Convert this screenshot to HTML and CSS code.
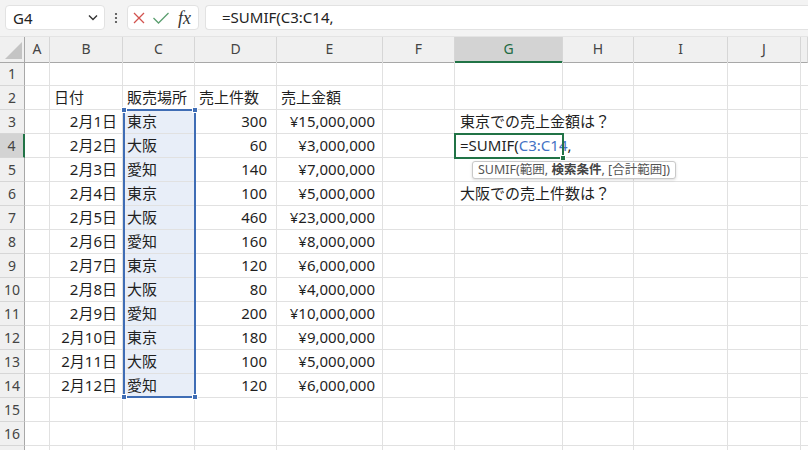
FILE: index.html
```html
<!DOCTYPE html>
<html lang="ja">
<head>
<meta charset="utf-8">
<title>Sheet</title>
<link rel="stylesheet" href="styles.css">
</head>
<body>
<div class="topbar">
  <div class="namebox"><span>G4</span><svg width="10" height="7" viewBox="0 0 10 7"><path d="M1 1.5 L5 5.5 L9 1.5" fill="none" stroke="#333" stroke-width="1.4"/></svg></div>
  <div class="dots"><svg width="4" height="14" viewBox="0 0 4 14"><circle cx="2" cy="3" r="1.1" fill="#444"/><circle cx="2" cy="7" r="1.1" fill="#444"/><circle cx="2" cy="11" r="1.1" fill="#444"/></svg></div>
  <div class="fnbox">
    <svg class="ico" width="14" height="14" viewBox="0 0 14 14"><path d="M2 2 L12 12 M12 2 L2 12" stroke="#d2534f" stroke-width="1.3" fill="none"/></svg>
    <svg class="ico" width="18" height="14" viewBox="0 0 18 14"><path d="M1.5 7 L6.5 12 L16.5 2" stroke="#5c9f70" stroke-width="1.3" fill="none"/></svg>
    <span class="fx">fx</span>
  </div>
  <div class="formula">=SUMIF(C3:C14,</div>
</div>
<div class="sheet">
  <div class="row hdr"><div class="corner"><svg width="25" height="24" viewBox="0 0 25 24"><polygon points="22,5 22,22 5,22" fill="#c4c4c4"/></svg></div><div>A</div><div>B</div><div>C</div><div>D</div><div>E</div><div>F</div><div class="cur">G</div><div>H</div><div>I</div><div>J</div><div></div></div>
  <div class="row"><div class="rh">1</div><div></div><div></div><div></div><div></div><div></div><div></div><div></div><div></div><div></div><div></div><div></div></div>
  <div class="row"><div class="rh">2</div><div></div><div>日付</div><div>販売場所</div><div>売上件数</div><div>売上金額</div><div></div><div></div><div></div><div></div><div></div><div></div></div>
  <div class="row"><div class="rh">3</div><div></div><div class="dt">2月1日</div><div class="s">東京</div><div class="num">300</div><div class="yen">¥15,000,000</div><div></div><div class="ov">東京での売上金額は？</div><div></div><div></div><div></div><div></div></div>
  <div class="row"><div class="rh cur">4</div><div></div><div class="dt">2月2日</div><div class="s">大阪</div><div class="num">60</div><div class="yen">¥3,000,000</div><div></div><div class="ov">=SUMIF(<span class="ref">C3:C14</span>,</div><div></div><div></div><div></div><div></div></div>
  <div class="row"><div class="rh">5</div><div></div><div class="dt">2月3日</div><div class="s">愛知</div><div class="num">140</div><div class="yen">¥7,000,000</div><div></div><div></div><div></div><div></div><div></div><div></div></div>
  <div class="row"><div class="rh">6</div><div></div><div class="dt">2月4日</div><div class="s">東京</div><div class="num">100</div><div class="yen">¥5,000,000</div><div></div><div class="ov">大阪での売上件数は？</div><div></div><div></div><div></div><div></div></div>
  <div class="row"><div class="rh">7</div><div></div><div class="dt">2月5日</div><div class="s">大阪</div><div class="num">460</div><div class="yen">¥23,000,000</div><div></div><div></div><div></div><div></div><div></div><div></div></div>
  <div class="row"><div class="rh">8</div><div></div><div class="dt">2月6日</div><div class="s">愛知</div><div class="num">160</div><div class="yen">¥8,000,000</div><div></div><div></div><div></div><div></div><div></div><div></div></div>
  <div class="row"><div class="rh">9</div><div></div><div class="dt">2月7日</div><div class="s">東京</div><div class="num">120</div><div class="yen">¥6,000,000</div><div></div><div></div><div></div><div></div><div></div><div></div></div>
  <div class="row"><div class="rh">10</div><div></div><div class="dt">2月8日</div><div class="s">大阪</div><div class="num">80</div><div class="yen">¥4,000,000</div><div></div><div></div><div></div><div></div><div></div><div></div></div>
  <div class="row"><div class="rh">11</div><div></div><div class="dt">2月9日</div><div class="s">愛知</div><div class="num">200</div><div class="yen">¥10,000,000</div><div></div><div></div><div></div><div></div><div></div><div></div></div>
  <div class="row"><div class="rh">12</div><div></div><div class="dt">2月10日</div><div class="s">東京</div><div class="num">180</div><div class="yen">¥9,000,000</div><div></div><div></div><div></div><div></div><div></div><div></div></div>
  <div class="row"><div class="rh">13</div><div></div><div class="dt">2月11日</div><div class="s">大阪</div><div class="num">100</div><div class="yen">¥5,000,000</div><div></div><div></div><div></div><div></div><div></div><div></div></div>
  <div class="row"><div class="rh">14</div><div></div><div class="dt">2月12日</div><div class="s">愛知</div><div class="num">120</div><div class="yen">¥6,000,000</div><div></div><div></div><div></div><div></div><div></div><div></div></div>
  <div class="row"><div class="rh">15</div><div></div><div></div><div></div><div></div><div></div><div></div><div></div><div></div><div></div><div></div><div></div></div>
  <div class="row"><div class="rh">16</div><div></div><div></div><div></div><div></div><div></div><div></div><div></div><div></div><div></div><div></div><div></div></div>
  <div class="row"><div class="rh"></div><div></div><div></div><div></div><div></div><div></div><div></div><div></div><div></div><div></div><div></div><div></div></div>

  <div class="selbox"><i class="h tl"></i><i class="h tr"></i><i class="h bl"></i><i class="h br"></i></div>
  <div class="active"><i class="fill"></i></div>
  <div class="tip">SUMIF(範囲, <b>検索条件</b>, [合計範囲])</div>
</div>
</body>
</html>
```
FILE: styles.css
```css
* { box-sizing: border-box; margin: 0; padding: 0; }
body {
  width: 808px;
  height: 450px;
  overflow: hidden;
  background: #fff;
  font-family: "Noto Sans", "Noto Sans CJK JP", sans-serif;
  color: #1f1f1f;
}
.topbar {
  height: 37px;
  background: #f3f3f3;
  display: flex;
  align-items: flex-start;
  padding: 5px 0 0 5px;
  border-bottom: 1px solid #e4e4e4;
}
.namebox {
  width: 100px;
  height: 25px;
  background: #fff;
  border: 1px solid #e2e2e2;
  border-radius: 4px;
  display: flex;
  align-items: center;
  justify-content: space-between;
  padding: 0 6px 0 7px;
  font-size: 15px;
  color: #222;
}
.dots {
  width: 22px;
  height: 25px;
  display: flex;
  align-items: center;
  justify-content: center;
}
.fnbox {
  width: 72px;
  height: 25px;
  background: #fff;
  border: 1px solid #e2e2e2;
  border-radius: 4px;
  display: flex;
  align-items: center;
  padding-left: 4px;
  gap: 6px;
}
.fx {
  font-family: "Liberation Serif", serif;
  font-style: italic;
  font-size: 18px;
  color: #333;
  line-height: 1;
  margin-left: 2px;
}
.formula {
  margin-left: 6px;
  flex: 1;
  height: 25px;
  background: #fff;
  border: 1px solid #e2e2e2;
  border-right: none;
  border-radius: 4px 0 0 4px;
  padding-left: 16px;
  font-size: 15px;
  line-height: 23px;
  color: #222;
}
.sheet { position: relative; }
.row {
  display: grid;
  grid-template-columns: 25px 25px 73px 72px 82px 106px 72px 108px 71px 94px 73px 1fr;
  height: 24px;
}
.row > div {
  border-right: 1px solid #e1e1e1;
  border-bottom: 1px solid #e1e1e1;
  font-size: 15px;
  line-height: 23px;
  padding: 0 4px;
  white-space: nowrap;
}
.row.hdr { height: 25px; }
.row.hdr > div {
  background: #f0f0f0;
  border-right: 1px solid #d6d6d6;
  border-bottom: 1px solid #a8a8a8;
  text-align: center;
  font-size: 14px;
  line-height: 24px;
  color: #444;
  padding: 0;
}
.row.hdr > div.corner { position: relative; border-right-color: #a8a8a8; }
.corner svg { position: absolute; left: 0; top: 0; }
.row.hdr > div.cur {
  background: #d3d3d3;
  border-bottom: 2px solid #217346;
  color: #1e6b43;
}
.row > div.rh {
  background: #f0f0f0;
  border-right: 1px solid #a8a8a8;
  border-bottom: 1px solid #d6d6d6;
  text-align: center;
  font-size: 14px;
  color: #444;
  padding: 0;
}
.row > div.rh.cur {
  background: #d3d3d3;
  border-right: 2px solid #217346;
}
.row > div.dt { text-align: right; padding-right: 5px; }
.row > div.num { text-align: right; padding-right: 9px; }
.row > div.yen { text-align: right; padding-right: 7px; }
.row > div.s { background: #e8eef8; }
.row > div.ov { overflow: visible; border-right-color: transparent; padding-left: 5px; }
.ref { color: #4472c4; }
.selbox {
  position: absolute;
  left: 123px;
  top: 72px;
  width: 73px;
  height: 289px;
  border: 2px solid #3f6db5;
}
.h {
  position: absolute;
  width: 6px;
  height: 6px;
  background: #3f6db5;
  border: 1px solid #fff;
}
.h.tl { left: -4px; top: -4px; }
.h.tr { right: -4px; top: -4px; }
.h.bl { left: -4px; bottom: -4px; }
.h.br { right: -4px; bottom: -4px; }
.active {
  position: absolute;
  left: 454px;
  top: 96px;
  width: 110px;
  height: 26px;
  border: 2px solid #217346;
}
.fill {
  position: absolute;
  right: -4px;
  bottom: -4px;
  width: 6px;
  height: 6px;
  background: #217346;
  border: 1px solid #fff;
}
.tip {
  position: absolute;
  left: 472px;
  top: 124px;
  height: 18px;
  padding: 0 5px 0 5px;
  background: #fff;
  border: 1px solid #c9c9c9;
  border-radius: 3px;
  box-shadow: 0 1px 3px rgba(0,0,0,0.15);
  font-size: 12.5px;
  line-height: 16px;
  color: #555;
  white-space: nowrap;
}
.tip b { font-weight: 700; color: #444; }
```
